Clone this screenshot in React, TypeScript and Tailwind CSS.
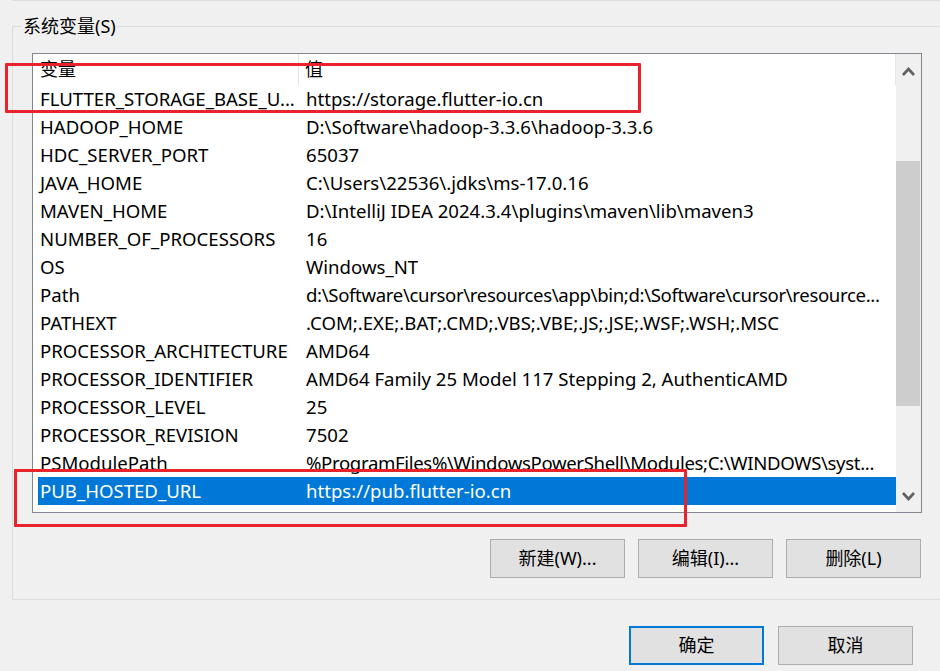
import React from "react";

type Row = { name: string; value: string; selected?: boolean; tight?: boolean };

const rows: Row[] = [
  { name: "FLUTTER_STORAGE_BASE_U...", value: "https://storage.flutter-io.cn" },
  { name: "HADOOP_HOME", value: "D:\\Software\\hadoop-3.3.6\\hadoop-3.3.6" },
  { name: "HDC_SERVER_PORT", value: "65037" },
  { name: "JAVA_HOME", value: "C:\\Users\\22536\\.jdks\\ms-17.0.16" },
  { name: "MAVEN_HOME", value: "D:\\IntelliJ IDEA 2024.3.4\\plugins\\maven\\lib\\maven3" },
  { name: "NUMBER_OF_PROCESSORS", value: "16" },
  { name: "OS", value: "Windows_NT" },
  { name: "Path", value: "d:\\Software\\cursor\\resources\\app\\bin;d:\\Software\\cursor\\resource...", tight: true },
  { name: "PATHEXT", value: ".COM;.EXE;.BAT;.CMD;.VBS;.VBE;.JS;.JSE;.WSF;.WSH;.MSC" },
  { name: "PROCESSOR_ARCHITECTURE", value: "AMD64" },
  { name: "PROCESSOR_IDENTIFIER", value: "AMD64 Family 25 Model 117 Stepping 2, AuthenticAMD" },
  { name: "PROCESSOR_LEVEL", value: "25" },
  { name: "PROCESSOR_REVISION", value: "7502" },
  { name: "PSModulePath", value: "%ProgramFiles%\\WindowsPowerShell\\Modules;C:\\WINDOWS\\syst...", tight: true },
  { name: "PUB_HOSTED_URL", value: "https://pub.flutter-io.cn", selected: true },
  { name: "TEMP", value: "%USERPROFILE%\\AppData\\Local\\Temp" },
];

function Chevron({ up }: { up?: boolean }) {
  return (
    <svg width="13" height="9" viewBox="0 0 13 9" className="block">
      <path
        d={up ? "M1 8 L6.5 2 L12 8" : "M1 1 L6.5 7 L12 1"}
        fill="none"
        stroke="#606060"
        strokeWidth="2.6"
      />
    </svg>
  );
}

function WinButton({ label, primary }: { label: string; primary?: boolean }) {
  return (
    <button
      className={
        primary
          ? "h-[39px] w-[135px] border-2 border-[#0078d7] bg-[#e1e1e1] text-[18px] text-black"
          : "h-[39px] w-[135px] border border-[#adadad] bg-[#e1e1e1] text-[18px] text-black"
      }
    >
      {label}
    </button>
  );
}

export default function App() {
  return (
    <div
      className="relative h-[671px] w-[940px] overflow-hidden bg-[#f0f0f0] text-[18px] text-black"
      style={{ fontFamily: '"Noto Sans", "Noto Sans CJK SC", sans-serif' }}
    >
      {/* bottom edge of the user variables group above */}
      <div className="ml-[12px] h-[1px] bg-[#dcdcdc]" />

      <fieldset className="ml-[12px] mt-[12px] h-[587px] border-y border-l border-[#dcdcdc]">
        <legend className="ml-[9px] px-[1px] leading-[26px]">系统变量(S)</legend>

        <div className="ml-[19px] mt-[14px] flex h-[460px] w-[890px] border border-[#828790] bg-white">
          <div className="flex w-[863px] flex-col overflow-hidden text-[18.6px]">
            <div className="flex h-[31px] shrink-0 items-center text-[18px]">
              <div className="h-full w-[266px] border-r border-[#e5e5e5] pl-[7px] pt-[4px] leading-[22px]">变量</div>
              <div className="h-full flex-1 border-r border-[#e5e5e5] pl-[6px] pt-[4px] leading-[22px]">值</div>
            </div>
            {rows.map((r) => (
              <div key={r.name} className="flex h-[28px] shrink-0 pl-[5px]">
                <div
                  className={
                    r.selected
                      ? "flex flex-1 items-center bg-[#0078d7] text-white"
                      : "flex flex-1 items-center"
                  }
                >
                  <div className="w-[268px] shrink-0 whitespace-nowrap pl-[2px]">{r.name}</div>
                  <div
                    className={
                      r.tight
                        ? "overflow-hidden whitespace-nowrap tracking-[-0.35px]"
                        : "overflow-hidden whitespace-nowrap"
                    }
                  >
                    {r.value}
                  </div>
                </div>
              </div>
            ))}
          </div>
          <div className="flex w-[25px] flex-col items-center bg-[#f0f0f0]">
            <div className="flex h-[32px] w-full items-center justify-center pt-[3px]">
              <Chevron up />
            </div>
            <div className="mt-[75px] h-[245px] w-[24px] self-start bg-[#cdcdcd]" />
            <div className="flex-1" />
            <div className="flex h-[28px] w-full items-center justify-center pb-[4px]">
              <Chevron />
            </div>
          </div>
        </div>

        <div className="mt-[26px] flex justify-end gap-[13px] pr-[19px]">
          <WinButton label="新建(W)..." />
          <WinButton label="编辑(I)..." />
          <WinButton label="删除(L)" />
        </div>
      </fieldset>

      <div className="mt-[26px] flex justify-end gap-[14px] pr-[27px]">
        <WinButton label="确定" primary />
        <WinButton label="取消" />
      </div>

      {/* red annotation boxes drawn over the screenshot */}
      <div className="absolute left-[5px] top-[63px] h-[50px] w-[636px] rounded-[1px] border-[3px] border-[#e8232b]" />
      <div className="absolute left-[14px] top-[469px] h-[58px] w-[673px] rounded-[1px] border-[3px] border-[#e8232b]" />
    </div>
  );
}
